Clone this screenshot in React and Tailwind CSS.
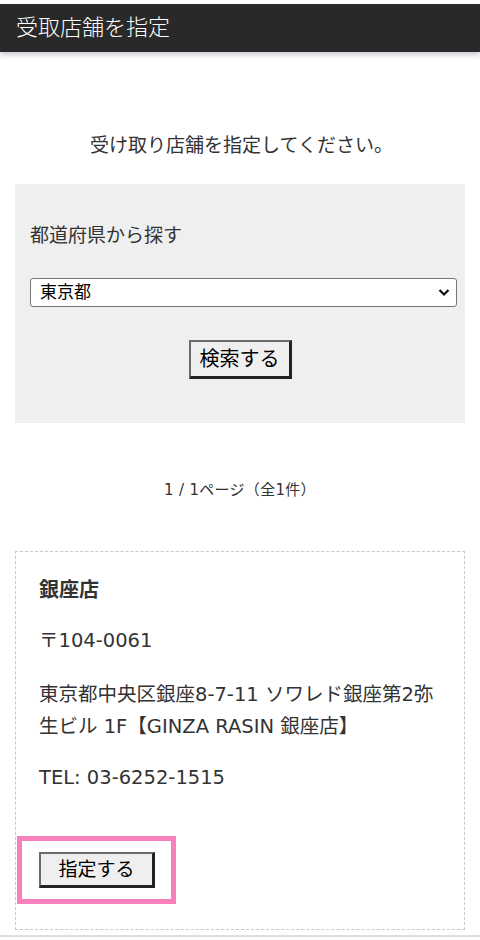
export default function App() {
  const font = { fontFamily: '"DejaVu Sans", "Noto Sans CJK JP", sans-serif' };
  return (
    <div className="w-[480px] min-h-[940px] bg-white text-[#333] pt-[4px]" style={font}>
      <header className="h-[48px] bg-[#292929] shadow-[0_3px_5px_rgba(40,50,80,0.25)] flex items-center px-[16px]">
        <h1 className="text-white text-[22px] leading-none font-light">受取店舗を指定</h1>
      </header>
      <p className="mt-[79px] text-center text-[19px] leading-[28px] pl-[3px]">受け取り店舗を指定してください。</p>
      <section className="mx-[15px] mt-[25px] bg-[#efefef] pt-[37px] pb-[44px] pl-[15px] pr-[8px]">
        <p className="text-[19px] leading-[28px]">都道府県から探す</p>
        <div className="mt-[29px] relative h-[29px] w-[427px] bg-white border border-[#767676] rounded-[3px] flex items-center pl-[9px]">
          <span className="text-[17px] leading-none text-black">東京都</span>
          <svg className="absolute right-[6px] top-[9px]" width="12" height="9" viewBox="0 0 12 9">
            <path d="M1.5 2 L6 6.5 L10.5 2" fill="none" stroke="#111" strokeWidth="2.2" />
          </svg>
        </div>
        <div className="mt-[33px] flex justify-center pr-[7px]">
          <button className="h-[39px] w-[103px] bg-[#efefef] border-t-2 border-l-2 border-b-[3px] border-r-[3px] border-t-[#6b6b6b] border-l-[#6b6b6b] border-b-[#222] border-r-[#222] text-[20px] leading-none text-black">
            検索する
          </button>
        </div>
      </section>
      <p className="mt-[55px] text-center text-[15px] leading-[24px] tracking-[0.3px]">1 / 1ページ（全1件）</p>
      <article className="mx-[15px] mt-[49px] border border-dashed border-[#c8c8c8] pt-[24px] pb-[25px]">
        <div className="pl-[23px] pr-[10px]">
          <h2 className="text-[20px] leading-[28px] font-bold">銀座店</h2>
          <p className="mt-[23px] text-[19.5px] leading-[28px]">〒104-0061</p>
          <p className="mt-[24px] text-[19.5px] leading-[32px]">東京都中央区銀座8-7-11 ソワレド銀座第2弥<br />生ビル 1F【GINZA RASIN 銀座店】</p>
          <p className="mt-[21px] text-[19.5px] leading-[28px]">TEL: 03-6252-1515</p>
        </div>
        <div className="mt-[44px] ml-[1px] w-[159px] h-[68px] border-[5px] border-[#f880bd] pt-[11px] pl-[17px]">
          <button className="h-[36px] w-[116px] bg-[#efefef] border-t-2 border-l-2 border-b-[3px] border-r-[3px] border-t-[#6b6b6b] border-l-[#6b6b6b] border-b-[#222] border-r-[#222] text-[19px] leading-none text-black">
            指定する
          </button>
        </div>
      </article>
      <div className="mt-[5px] border-t-2 border-[#dedede]"></div>
    </div>
  );
}
